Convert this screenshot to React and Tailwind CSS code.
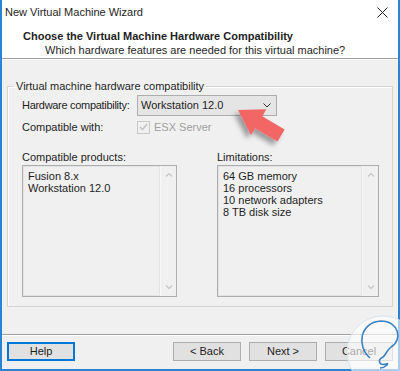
import React from 'react';

function ListBox({ items, className }) {
  return (
    <div className={`flex h-[132px] border border-[#adadad] bg-[#f0f0f0] ${className}`}>
      <div className="flex-1 border border-[#e3e3e3] px-[4px] pt-[3px] text-[11px] leading-[12px] text-[#1e1e1e]">
        {items.map((it) => (
          <div key={it} className="h-[12px]">{it}</div>
        ))}
      </div>
      <div className="flex w-[16px] flex-col items-center justify-between border-l border-[#f7f7f7] py-[6px]">
        <svg width="8" height="5" viewBox="0 0 8 5"><path d="M1 4.5 L4 1.5 L7 4.5" fill="none" stroke="#c4c4c4" strokeWidth="1.2" /></svg>
        <svg width="8" height="5" viewBox="0 0 8 5"><path d="M1 0.5 L4 3.5 L7 0.5" fill="none" stroke="#c4c4c4" strokeWidth="1.2" /></svg>
      </div>
    </div>
  );
}

function Btn({ children, focused }) {
  return (
    <button
      className={`h-[19px] w-[68px] bg-[#e1e1e1] text-[11px] leading-none text-[#1e1e1e] ${
        focused ? 'border-2 border-[#0078d7]' : 'border border-[#adadad]'
      }`}
    >
      {children}
    </button>
  );
}

export default function App() {
  return (
    <div
      className="relative flex h-[371px] w-[400px] flex-col border-x-2 border-b-2 border-[#2a84d2] bg-[#f0f0f0] text-[11px] text-[#1e1e1e]"
      style={{ fontFamily: '"Liberation Sans", Arial, sans-serif' }}
    >
      {/* header */}
      <div className="h-[58px] bg-white">
        <div className="flex h-[24px] items-center justify-between pl-[3px] pr-[10px]">
          <span>New Virtual Machine Wizard</span>
          <svg width="11" height="11" viewBox="0 0 11 11"><path d="M0.5 0.5 L10.5 10.5 M10.5 0.5 L0.5 10.5" stroke="#222" strokeWidth="1" /></svg>
        </div>
        <div className="pl-[21px] pt-[5px] font-bold leading-[14px]">Choose the Virtual Machine Hardware Compatibility</div>
        <div className="pl-[43px] leading-[14px]">Which hardware features are needed for this virtual machine?</div>
      </div>
      <div className="h-[2px] border-t border-[#a0a0a0] bg-white" />

      {/* body */}
      <div className="flex flex-1 flex-col px-[5px] pt-[20px]">
        <fieldset className="h-[227px] border border-[#d5d5d5] pl-[14px] pr-[13px] shadow-[inset_1px_1px_0_#fff]">
          <legend className="ml-[-8px] px-[2px] leading-[12px]">Virtual machine hardware compatibility</legend>
          <div className="mt-[3px] flex h-[21px] items-center">
            <span className="w-[115px] whitespace-nowrap tracking-[-0.3px]">Hardware compatibility:</span>
            <div className="flex h-[21px] w-[140px] items-center justify-between border border-[#adadad] bg-[#e5e5e5] pl-[3px] pr-[5px]">
              <span>Workstation 12.0</span>
              <svg width="8" height="5" viewBox="0 0 8 5"><path d="M0.5 0.5 L4 4 L7.5 0.5" fill="none" stroke="#333" strokeWidth="1" /></svg>
            </div>
          </div>
          <div className="mt-[1px] flex h-[20px] items-center">
            <span className="w-[115px]">Compatible with:</span>
            <span className="flex h-[13px] w-[13px] items-center justify-center border border-[#c8c8c8] bg-[#f0f0f0]">
              <svg width="9" height="8" viewBox="0 0 9 8"><path d="M1 4 L3.5 6.5 L8 1" fill="none" stroke="#c0c0c0" strokeWidth="1.3" /></svg>
            </span>
            <span className="ml-[4px] text-[#a0a0a0]">ESX Server</span>
          </div>
          <div className="mt-[14px] flex">
            <div className="flex w-[195px] flex-col">
              <span className="mb-[2px] leading-[12px]">Compatible products:</span>
              <ListBox className="w-[155px]" items={['Fusion 8.x', 'Workstation 12.0']} />
            </div>
            <div className="flex flex-col">
              <span className="mb-[2px] leading-[12px]">Limitations:</span>
              <ListBox className="w-[162px]" items={['64 GB memory', '16 processors', '10 network adapters', '8 TB disk size']} />
            </div>
          </div>
        </fieldset>
      </div>

      {/* footer */}
      <div className="h-[2px] border-t border-[#a0a0a0] bg-white" />
      <div className="flex h-[33px] items-center px-[5px] pb-[4px] pt-[2px]">
        <Btn focused>Help</Btn>
        <div className="ml-auto flex gap-[8px]">
          <Btn>&lt; Back</Btn>
          <Btn>Next &gt;</Btn>
          <Btn>Cancel</Btn>
        </div>
      </div>

      {/* annotation overlay */}
      <svg className="pointer-events-none absolute left-[-2px] top-0" width="400" height="371" viewBox="0 0 400 371">
        <defs>
          <filter id="sh" x="-50%" y="-50%" width="200%" height="200%">
            <feDropShadow dx="-4" dy="4" stdDeviation="2.5" floodColor="#000" floodOpacity="0.35" />
          </filter>
        </defs>
        <polygon
          points="238,110 266.4,109.3 262.3,116.2 284.7,129.5 277.5,141.5 255.1,128.2 251,135.1"
          fill="#f36666"
          filter="url(#sh)"
        />
        <circle cx="383" cy="352" r="36" fill="#ffffff" fillOpacity="0.6" stroke="#dde3ea" strokeWidth="1" />
        <path
          d="M370 358 C 356 346, 360 322, 381 321 C 399 321, 403 340, 391 347 C 386 351, 386 355, 383 357 C 377 360, 379 366, 386 364 C 390 362, 386 368, 380 368"
          fill="none"
          stroke="#3b82c4"
          strokeWidth="1.6"
        />
      </svg>
    </div>
  );
}
